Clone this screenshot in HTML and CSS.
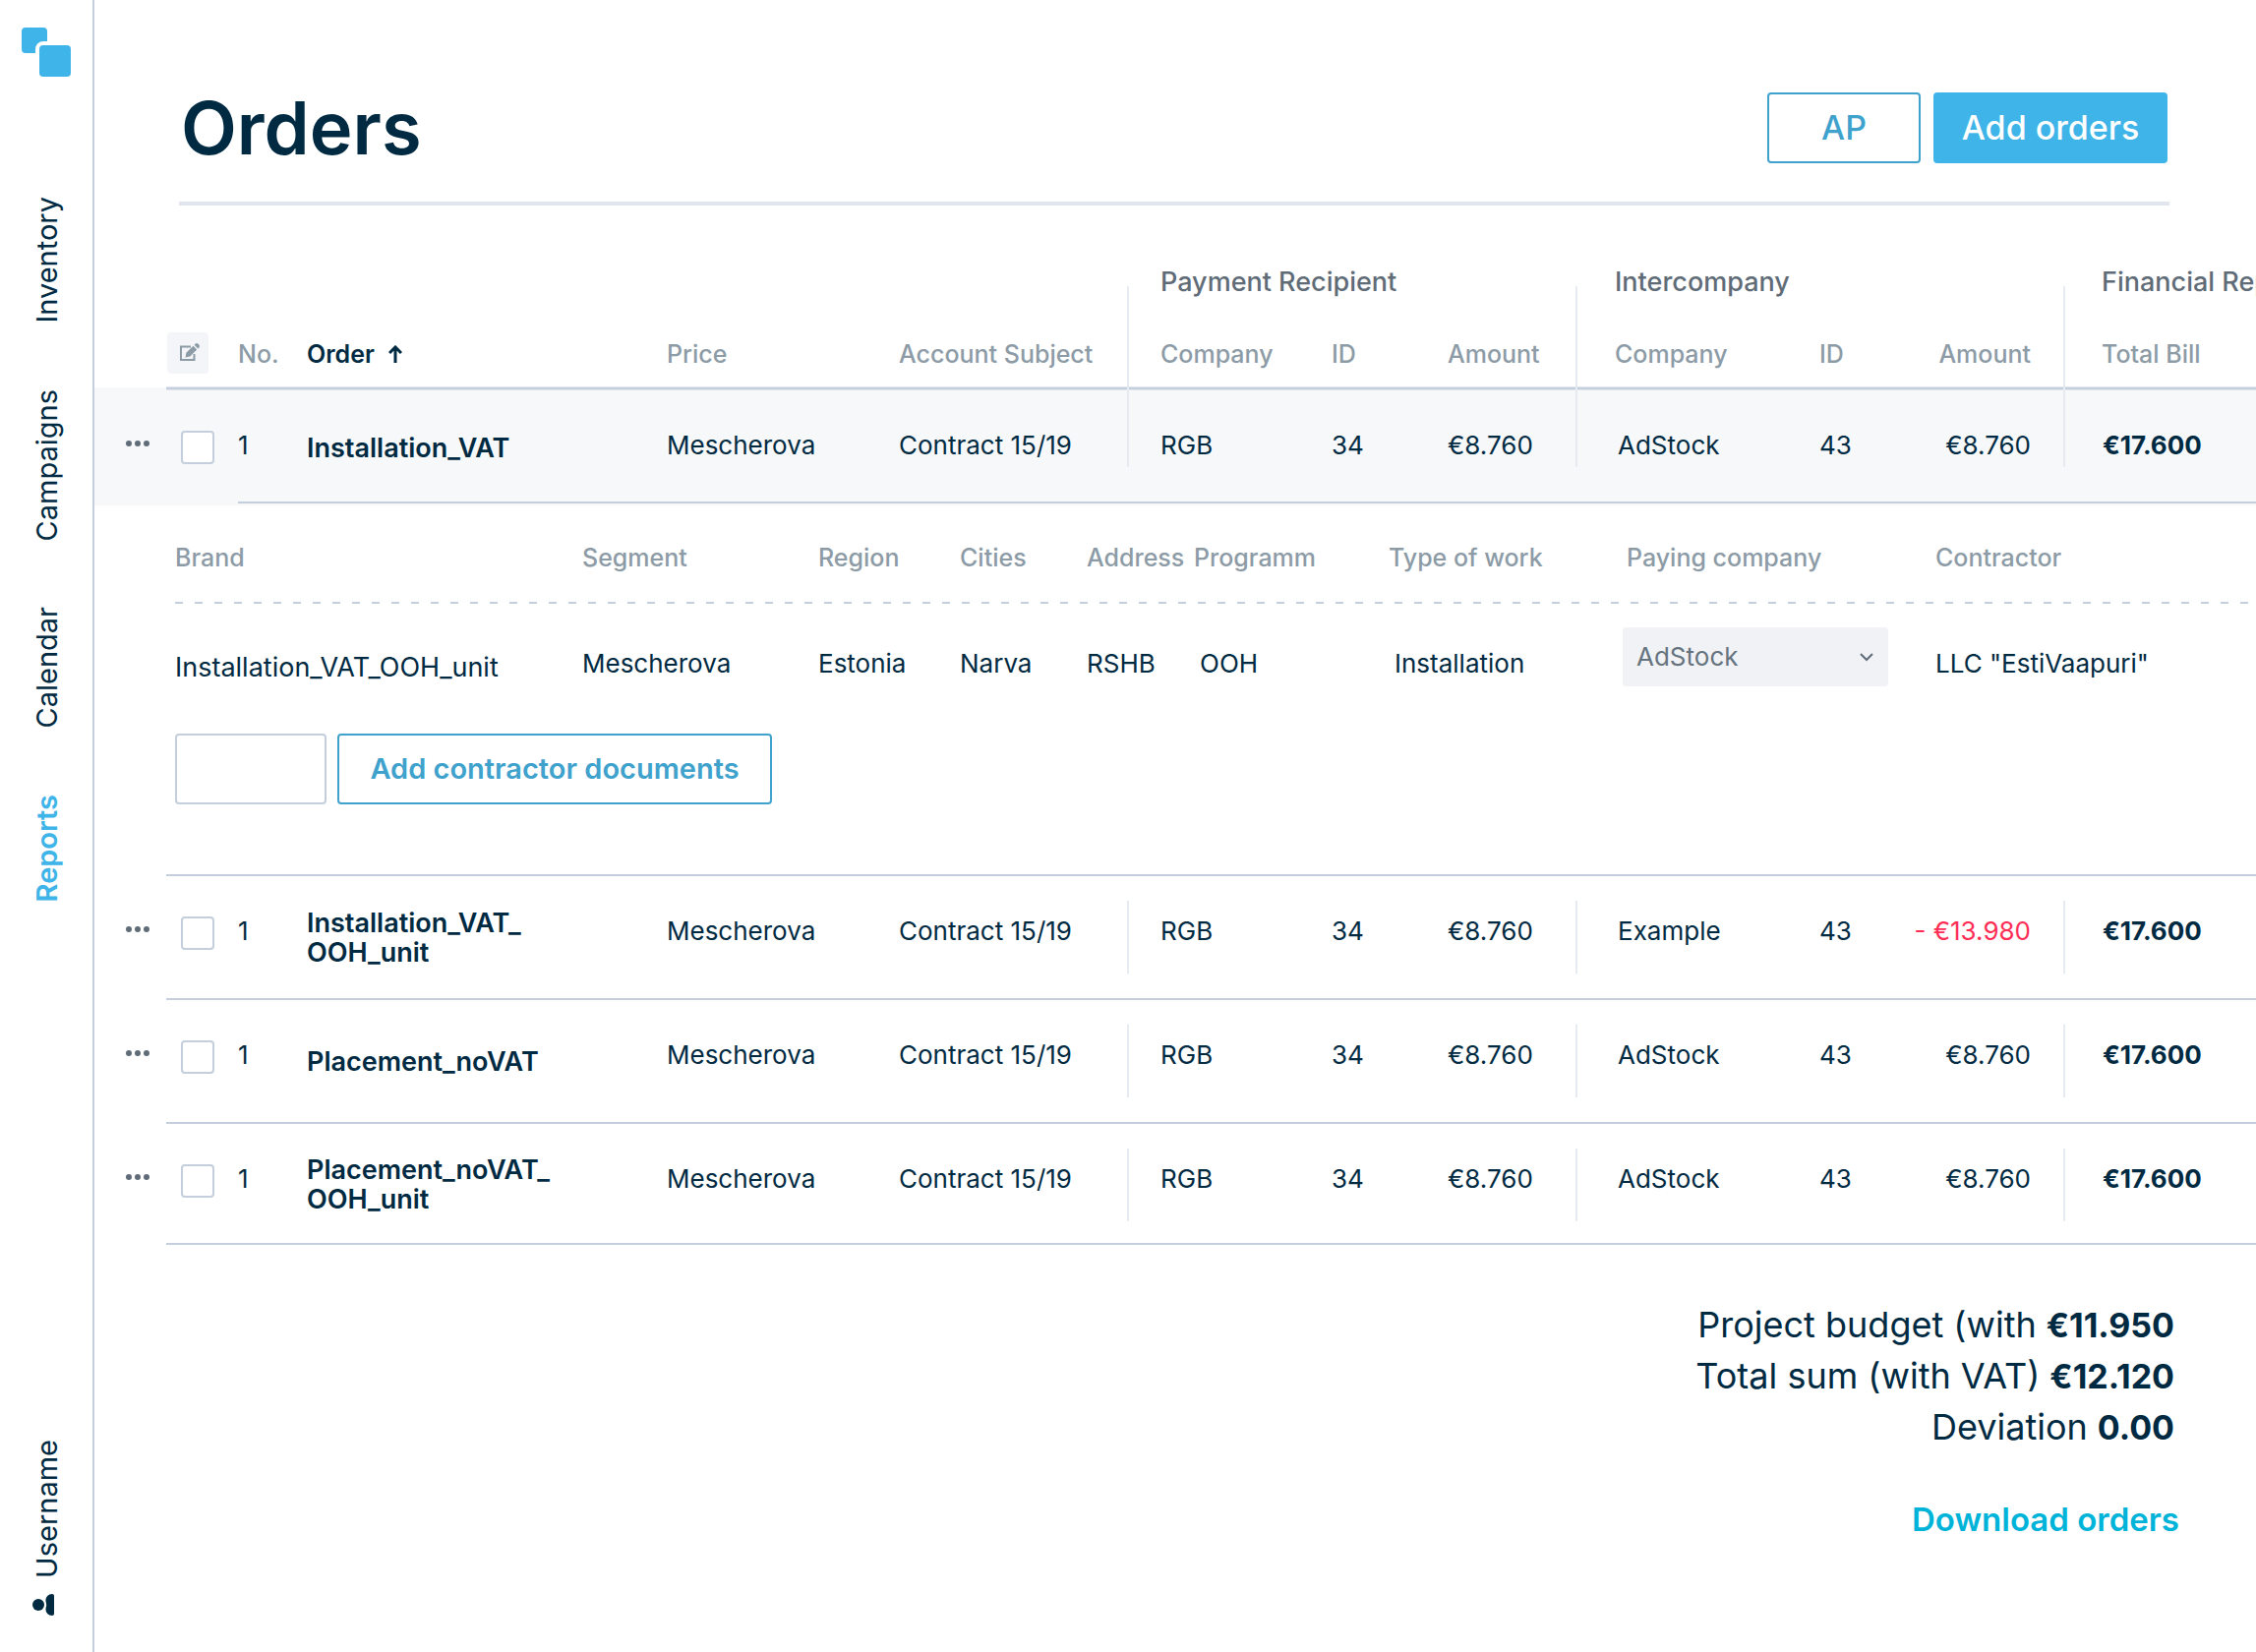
FILE: index.html
```html
<!DOCTYPE html>
<html lang="en">
<head>
<meta charset="utf-8">
<meta name="viewport" content="width=device-width, initial-scale=1">
<title>Orders</title>
<link rel="stylesheet" href="styles.css">
</head>
<body>
<div class="app">
  <aside class="sidebar">
    <a class="logo" href="#" aria-label="Home">
      <svg width="50" height="50" viewBox="0 0 50 50" fill="#3fb4e8">
        <path d="M4 0h18a4 4 0 0 1 4 4v10h-4a8 8 0 0 0-8 8v4H4a4 4 0 0 1-4-4V4a4 4 0 0 1 4-4z"/>
        <rect x="18" y="18" width="32" height="32" rx="4"/>
      </svg>
    </a>
    <nav class="nav">
      <a href="#">Inventory</a>
      <a href="#">Campaigns</a>
      <a href="#">Calendar</a>
      <a class="active" href="#">Reports</a>
    </nav>
    <a class="user" href="#">
      <span class="vertical">Username</span>
      <svg width="22" height="22" viewBox="0 0 22 22" fill="#002a42">
        <circle cx="6" cy="11" r="6"/>
        <path d="M22 2v18a2 2 0 0 1-2 2c-4 0-6.500-3-6.500-6.500 0-2 .7-2.500.7-4.500s-.7-2.500-.7-4.500C13.500 3 16 0 20 0a2 2 0 0 1 2 2z"/>
      </svg>
    </a>
  </aside>

  <main class="main">
    <header class="page-head">
      <h1>Orders</h1>
      <div class="actions">
        <button class="btn btn-outline btn-ap" type="button">AP</button>
        <button class="btn btn-solid" type="button">Add orders</button>
      </div>
    </header>

    <div class="table-wrap">
      <table class="orders">
        <colgroup>
          <col class="c-menu"><col class="c-check"><col class="c-no"><col class="c-order"><col class="c-price"><col class="c-subject">
          <col class="c-company"><col class="c-id"><col class="c-amount">
          <col class="c-company2"><col class="c-id2"><col class="c-amount2">
          <col class="c-total">
        </colgroup>
        <thead>
          <tr class="groups">
            <td colspan="6"></td>
            <th class="split" colspan="3" scope="colgroup">Payment Recipient</th>
            <th class="split" colspan="3" scope="colgroup">Intercompany</th>
            <th class="split" scope="colgroup">Financial Report</th>
          </tr>
          <tr class="cols">
            <td class="menu"></td>
            <th><button class="edit" type="button" aria-label="Edit">
              <svg width="22" height="20" viewBox="-2 0 22 20" overflow="visible">
                <path d="M12 3.500H2v13.500h13.500V11" fill="none" stroke="#8c9ba6" stroke-width="2"/>
                <path d="M6.500 14.500l1-5L14.500 2.800l3.700 3.700-7 7zM15.600 1.800l1-1a2 2 0 0 1 2.900 0l.8.8a2 2 0 0 1 0 2.900l-1 1z" fill="#8c9ba6"/>
              </svg>
            </button></th>
            <th scope="col">No.</th>
            <th class="sorted" scope="col" aria-sort="ascending">Order
              <svg width="14" height="18" viewBox="0 0 14 18" fill="none" stroke="#002a42" stroke-width="3"><path d="M7 18V2M1 8l6-6 6 6"/></svg>
            </th>
            <th scope="col">Price</th>
            <th scope="col">Account Subject</th>
            <th class="split" scope="col">Company</th>
            <th scope="col">ID</th>
            <th scope="col">Amount</th>
            <th class="split" scope="col">Company</th>
            <th scope="col">ID</th>
            <th class="right" scope="col">Amount</th>
            <th class="split" scope="col">Total Bill</th>
          </tr>
        </thead>
        <tbody>
          <tr class="row open">
            <td class="menu"><button class="dots" type="button" aria-label="Row menu"><i></i><i></i><i></i></button></td>
            <td class="check"><input type="checkbox" aria-label="Select Installation_VAT"></td>
            <td>1</td>
            <td class="name">Installation_VAT</td>
            <td>Mescherova</td>
            <td>Contract 15/19</td>
            <td class="split">RGB</td>
            <td>34</td>
            <td>€8.760</td>
            <td class="split">AdStock</td>
            <td>43</td>
            <td class="right">€8.760</td>
            <td class="split total">€17.600</td>
          </tr>
          <tr class="detail-row">
            <td class="menu"></td>
            <td class="detail" colspan="12">
              <table class="units">
                <colgroup>
                  <col class="u-brand"><col class="u-segment"><col class="u-region"><col class="u-city"><col class="u-address">
                  <col class="u-program"><col class="u-work"><col class="u-paying"><col>
                </colgroup>
                <thead>
                  <tr>
                    <th scope="col">Brand</th>
                    <th scope="col">Segment</th>
                    <th scope="col">Region</th>
                    <th scope="col">Cities</th>
                    <th scope="col">Address</th>
                    <th scope="col">Programm</th>
                    <th scope="col">Type of work</th>
                    <th scope="col">Paying company</th>
                    <th scope="col">Contractor</th>
                  </tr>
                </thead>
                <tbody>
                  <tr>
                    <td class="brand">Installation_VAT_OOH_unit</td>
                    <td>Mescherova</td>
                    <td>Estonia</td>
                    <td>Narva</td>
                    <td>RSHB</td>
                    <td class="indent">OOH</td>
                    <td class="indent">Installation</td>
                    <td class="paying">
                      <div class="select">
                        <select aria-label="Paying company"><option>AdStock</option><option>Example</option></select>
                        <svg width="14" height="10" viewBox="0 0 14 10" fill="none" stroke="#5f6c78" stroke-width="2"><path d="M1 2l6 6 6-6"/></svg>
                      </div>
                    </td>
                    <td>LLC "EstiVaapuri"</td>
                  </tr>
                </tbody>
              </table>
              <div class="docs">
                <input type="text" aria-label="Document number">
                <button class="btn btn-outline btn-docs" type="button">Add contractor documents</button>
              </div>
            </td>
          </tr>
          <tr class="row">
            <td class="menu"><button class="dots" type="button" aria-label="Row menu"><i></i><i></i><i></i></button></td>
            <td class="check"><input type="checkbox" aria-label="Select Installation_VAT_OOH_unit"></td>
            <td>1</td>
            <td class="name">Installation_VAT_<br>OOH_unit</td>
            <td>Mescherova</td>
            <td>Contract 15/19</td>
            <td class="split">RGB</td>
            <td>34</td>
            <td>€8.760</td>
            <td class="split">Example</td>
            <td>43</td>
            <td class="right negative">- €13.980</td>
            <td class="split total">€17.600</td>
          </tr>
          <tr class="row">
            <td class="menu"><button class="dots" type="button" aria-label="Row menu"><i></i><i></i><i></i></button></td>
            <td class="check"><input type="checkbox" aria-label="Select Placement_noVAT"></td>
            <td>1</td>
            <td class="name">Placement_noVAT</td>
            <td>Mescherova</td>
            <td>Contract 15/19</td>
            <td class="split">RGB</td>
            <td>34</td>
            <td>€8.760</td>
            <td class="split">AdStock</td>
            <td>43</td>
            <td class="right">€8.760</td>
            <td class="split total">€17.600</td>
          </tr>
          <tr class="row last">
            <td class="menu"><button class="dots" type="button" aria-label="Row menu"><i></i><i></i><i></i></button></td>
            <td class="check"><input type="checkbox" aria-label="Select Placement_noVAT_OOH_unit"></td>
            <td>1</td>
            <td class="name">Placement_noVAT_<br>OOH_unit</td>
            <td>Mescherova</td>
            <td>Contract 15/19</td>
            <td class="split">RGB</td>
            <td>34</td>
            <td>€8.760</td>
            <td class="split">AdStock</td>
            <td>43</td>
            <td class="right">€8.760</td>
            <td class="split total">€17.600</td>
          </tr>
        </tbody>
      </table>
    </div>

    <footer class="summary">
      <dl>
        <div><dt>Project budget (with</dt><dd>€11.950</dd></div>
        <div><dt>Total sum (with VAT)</dt><dd>€12.120</dd></div>
        <div><dt>Deviation</dt><dd>0.00</dd></div>
      </dl>
      <a class="download" href="#">Download orders</a>
    </footer>
  </main>
</div>
</body>
</html>
```
FILE: styles.css
```css
:root {
  --ink: #002a42;
  --muted: #8c9ba6;
  --slate: #5f6c78;
  --line: #c4cedc;
  --divider: #e6ebf2;
  --blue: #3fb4e8;
  --blue-dark: #3fa2cd;
  --shade: #f7f8fa;
}

* { box-sizing: border-box; }

body {
  margin: 0;
  background: #fff;
  color: var(--ink);
  font: 400 26px/30px Inter, "Liberation Sans", sans-serif;
}

button, input, select { font: inherit; color: inherit; margin: 0; }
a { color: inherit; text-decoration: none; }

.app { display: flex; min-height: 100vh; }

/* Sidebar */
.sidebar {
  flex: none;
  display: flex;
  flex-direction: column;
  align-items: center;
  width: 96px;
  padding: 28px 0 37px;
  border-right: 2px solid var(--line);
  font-size: 29px;
  line-height: 32px;
}
.logo { display: block; height: 50px; }
.logo svg, .user svg { display: block; }
.nav {
  display: flex;
  flex-direction: column;
  align-items: center;
  gap: 67px;
  margin-top: 122px;
  padding-left: 2px;
}
.nav a, .vertical { writing-mode: vertical-rl; transform: rotate(180deg); }
.nav .active { color: var(--blue); font-weight: 600; }
.user {
  display: flex;
  flex-direction: column;
  align-items: center;
  gap: 16px;
  margin-top: auto;
  padding-left: 2px;
}
.user svg { margin-right: 8px; }

/* Page header */
.main { flex: 1; min-width: 0; }
.page-head {
  display: flex;
  align-items: center;
  justify-content: space-between;
  height: 209px;
  margin: 0 88px 0 86px;
  padding: 54px 2px 0;
  border-bottom: 4px solid #e1e6ee;
}
h1 { margin: 0; font-size: 74px; line-height: 80px; font-weight: 600; }
.actions { display: flex; gap: 13px; }
.btn {
  height: 72px;
  border-radius: 4px;
  font-size: 34px;
  font-weight: 500;
  white-space: nowrap;
}
.btn-outline { border: 2px solid var(--blue-dark); background: #fff; color: var(--blue-dark); }
.btn-solid { width: 238px; padding: 0; border: 0; background: var(--blue); color: #fff; }
.btn-ap { width: 156px; }
.btn-docs { width: 442px; padding: 0; font-size: 29px; font-weight: 600; }

/* Orders table */
.table-wrap { overflow: hidden; padding-top: 51px; }
table { width: 100%; border-spacing: 0; table-layout: fixed; }
th, td { padding: 0; text-align: left; white-space: nowrap; }
.orders { min-width: 2198px; }
.c-menu { width: 73px; }
.c-check { width: 73px; }
.c-no { width: 70px; }
.c-order { width: 366px; }
.c-price { width: 236px; }
.c-subject { width: 232px; }
.c-company { width: 208px; }
.c-id { width: 118px; }
.c-amount { width: 130px; }
.c-company2 { width: 248px; }
.c-id2 { width: 80px; }
.c-amount2 { width: 168px; }

.groups > * { height: 62px; }
.groups th { color: var(--slate); font-size: 27px; font-weight: 500; vertical-align: top; padding-top: 12px; }
.groups .split { background: linear-gradient(var(--divider), var(--divider)) 0 31px / 2px 31px no-repeat; }

.cols > * {
  height: 75px;
  color: var(--muted);
  font-size: 25px;
  font-weight: 500;
  background: linear-gradient(#e1e6ee 1px, var(--line) 1px 3px, #e1e6ee 3px) 0 100% / 100% 4px no-repeat;
}
.cols .menu { background: linear-gradient(var(--shade), var(--shade)) 0 100% / 100% 3px no-repeat; }
.cols .split {
  background:
    linear-gradient(var(--divider), var(--divider)) 0 0 / 2px 100% no-repeat,
    linear-gradient(#e1e6ee 1px, var(--line) 1px 3px, #e1e6ee 3px) 0 100% / 100% 4px no-repeat;
}
.cols .sorted { color: var(--ink); font-weight: 600; }
.sorted svg { margin-left: 8px; }
.orders .split { padding-left: 34px; }
.orders .split ~ .split { padding-left: 40px; }
.groups .split:last-child, .cols .split:last-child { padding-left: 39px; }
.row .split ~ .split:not(.total) { padding-left: 43px; }
.orders .right { text-align: right; padding-right: 33px; }
.edit {
  display: grid;
  place-items: center;
  width: 42px;
  height: 42px;
  margin: 0 0 2px 1px;
  padding: 0;
  border: 0;
  border-radius: 4px;
  background: #f3f5f8;
}

.row > td {
  height: 126px;
  padding-top: 41px;
  vertical-align: top;
  background: linear-gradient(var(--line), var(--line)) 0 100% / 100% 2px no-repeat;
}
.row.last > td { height: 123px; }
.row > .menu { background: none; padding: 49px 0 0 30px; }
.row > .name { padding: 0; vertical-align: middle; font-size: 27px; font-weight: 600; }
.row > .split {
  background:
    linear-gradient(var(--divider), var(--divider)) 0 25px / 2px 74px no-repeat,
    linear-gradient(var(--line), var(--line)) 0 100% / 100% 2px no-repeat;
}
.row > .total { font-weight: 700; }
.row > .negative { color: #ff2d55; }

.row.open { background: var(--shade); }
.row.open > td { height: 117px; background-position: 0 113px; }
.row.open > .check { background: none; }
.row.open > .split { background-position: 0 0, 0 113px; background-size: 2px 78px, 100% 2px; }

.dots {
  display: flex;
  gap: 3px;
  padding: 2px;
  border: 0;
  background: none;
}
.dots i { width: 6px; height: 6px; border-radius: 50%; background: var(--slate); }
.check input {
  appearance: none;
  display: block;
  width: 34px;
  height: 34px;
  margin-left: 15px;
  border: 2px solid var(--line);
  border-radius: 4px;
  background: #fff;
}

/* Expanded order */
.detail {
  padding: 0 0 73px 9px;
  background: linear-gradient(var(--line), var(--line)) 0 100% / 100% 2px no-repeat;
}
.u-brand { width: 414px; }
.u-segment { width: 240px; }
.u-region { width: 144px; }
.u-city { width: 129px; }
.u-address { width: 109px; }
.u-program { width: 198px; }
.u-work { width: 242px; }
.u-paying { width: 314px; }
.units {
  background: repeating-linear-gradient(90deg, var(--line) 0 8px, transparent 8px 20px) 0 98px / 100% 2px no-repeat;
}
.units th {
  height: 100px;
  padding-top: 38px;
  vertical-align: top;
  color: var(--muted);
  font-size: 25px;
  font-weight: 500;
}
.units td { height: 132px; padding-top: 46px; vertical-align: top; }
.units .brand { padding-top: 50px; font-size: 27px; }
.units .indent { padding-left: 6px; }
.units .paying { padding-top: 24px; }
.select { display: grid; align-items: center; width: 270px; margin-left: -4px; }
.select select {
  grid-area: 1 / 1;
  appearance: none;
  height: 60px;
  padding: 0 44px 0 14px;
  border: 0;
  border-radius: 4px;
  background: #f1f2f6;
  color: #65737e;
}
.select svg { grid-area: 1 / 1; justify-self: end; margin-right: 15px; pointer-events: none; }
.docs { display: flex; gap: 11px; }
.docs input {
  width: 154px;
  height: 72px;
  padding: 0 16px;
  border: 2px solid var(--line);
  border-radius: 4px;
  background: #fff;
}

/* Totals */
.summary {
  display: flex;
  flex-direction: column;
  align-items: flex-end;
  padding: 55px 78px 0 0;
  font-size: 34px;
  line-height: 52px;
}
.summary dl { margin: 0; padding-right: 5px; }
.summary dl div { display: flex; align-items: baseline; justify-content: flex-end; gap: 10px; height: 52px; }
.summary dt { font-size: 36px; }
.summary dd { margin: 0; font-weight: 700; }
.download { margin-top: 42px; color: #00b3d8; font-size: 33px; font-weight: 600; }
```
